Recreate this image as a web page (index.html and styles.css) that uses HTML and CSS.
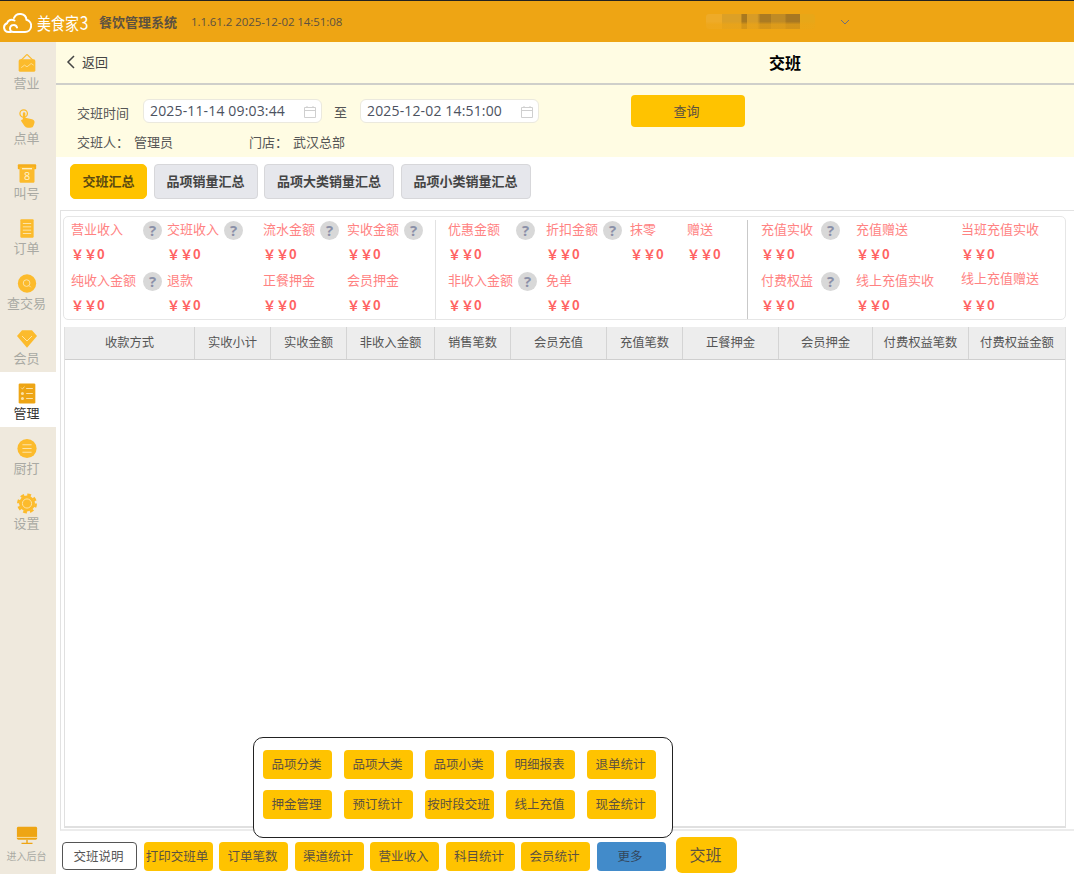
FILE: index.html
```html
<!DOCTYPE html>
<html lang="zh-CN">
<head>
<meta charset="utf-8">
<title>交班</title>
<link rel="stylesheet" href="styles.css">
</head>
<body>
<div class="app">
  <header class="topbar">
    <svg class="logo" viewBox="0 0 29 22"><path d="M8 21H5.500A4.500 4.500 0 0 1 4 12.300 5 5 0 0 1 11.500 9.500M11 7A6.500 6.500 0 0 1 23.500 8.800 6.200 6.200 0 0 1 22 21H10.500A3.500 3.500 0 0 1 10.500 14 3.500 3.500 0 0 1 14 16.500" fill="none" stroke="#fff" stroke-width="2" stroke-linecap="round"/></svg>
    <span class="brand">美食家<b>3</b></span>
    <span class="system">餐饮管理系统</span>
    <span class="version">1.1.61.2 2025-12-02 14:51:08</span>
    <span class="blur"></span>
    <svg class="chev" viewBox="0 0 10 6"><path d="M1 1l4 4 4-4" fill="none" stroke="#6b6f80" stroke-width="1"/></svg>
  </header>
  <div class="layout">
    <nav class="sidebar">
      <a class="nav"><svg viewBox="0 0 24 24"><path d="M12 1L5 8M12 1l7 7" stroke="#fcbb2c" stroke-width="1.500" fill="none"/><rect x="2" y="7" width="20" height="15" rx="2" fill="#fcbb2c"/><path d="M5 17l4-3 3 2 5-4 3 2" stroke="#fde3a5" fill="none"/></svg>营业</a>
      <a class="nav"><svg viewBox="0 0 24 24"><circle cx="8" cy="6" r="4.500" fill="none" stroke="#fcbb2c" stroke-width="1.500"/><path d="M7 6a1.500 1.500 0 0 1 3 0v5l8 2c2 .5 3.500 2 3 4l-1 3c-.5 2-2 3-4 3h-3c-2 0-3-1-4-2l-4-6c-.5-1 1-2.500 2.500-1.500L7 14z" fill="#fcbb2c"/></svg>点单</a>
      <a class="nav"><svg viewBox="0 0 24 24"><rect x="1" y="1" width="22" height="6" rx="1" fill="#f5ae1c"/><rect x="3" y="4" width="18" height="19" rx="1" fill="#fcbb2c"/><rect x="6" y="5.500" width="12" height="1.500" fill="#fff3cf"/><text class="ticket" x="12" y="20" text-anchor="middle">8</text></svg>叫号</a>
      <a class="nav"><svg viewBox="0 0 24 24"><rect x="4" y="1" width="16" height="22" rx="1" fill="#fcbb2c"/><path d="M7 6h10M7 10h10M7 14h10M7 18h10" stroke="#fde3a5" stroke-width="1.200"/></svg>订单</a>
      <a class="nav"><svg viewBox="0 0 24 24"><circle cx="12" cy="12" r="11" fill="#fcbb2c"/><circle cx="11.500" cy="11.500" r="4" fill="none" stroke="#fde3a5" stroke-width="1.200"/><path d="M14.500 14.500l2 2" stroke="#fde3a5" stroke-width="1.200"/></svg>查交易</a>
      <a class="nav"><svg viewBox="0 0 24 24"><path d="M6 2h12l6 7-12 14L0 9z" fill="#fcbb2c"/><path d="M6 9l6 6 6-6" fill="none" stroke="#fde3a5" stroke-width="1.200"/></svg>会员</a>
      <a class="nav active"><svg viewBox="0 0 24 24"><rect x="2" y="0" width="20" height="24" rx="1.500" fill="#eea514"/><path d="M5 5l1.500 1.500L9 4M11 6h8M11 12h8M11 18h8" stroke="#fbe2a8" fill="none" stroke-width="1.200"/><circle cx="6.500" cy="12" r="1.800" fill="#fbe2a8"/><circle cx="6.500" cy="18" r="1.800" fill="#fbe2a8"/></svg>管理</a>
      <a class="nav"><svg viewBox="0 0 24 24"><circle cx="12" cy="12" r="11.500" fill="#fcbb2c"/><path d="M6.500 7.500h11M6.500 12h11M6.500 16.500h11" stroke="#fde3a5" stroke-width="1.300"/></svg>厨打</a>
      <a class="nav"><svg viewBox="0 0 24 24"><circle cx="12" cy="12" r="9.500" fill="#fcbb2c"/><circle cx="12" cy="12" r="10.500" fill="none" stroke="#fcbb2c" stroke-width="3" stroke-dasharray="4.500 3.750"/><circle cx="12" cy="12" r="5.500" fill="none" stroke="#fde3a5" stroke-width="1.200"/></svg>设置</a>
      <a class="nav admin"><svg viewBox="0 0 24 24"><rect x="1" y="2" width="22" height="14" rx="1.500" fill="#eea514"/><rect x="1" y="13" width="22" height="1" fill="#fbe2a8"/><path d="M12 16v4M6 20h12" stroke="#eea514" stroke-width="1.500"/></svg>进入后台</a>
    </nav>
    <main class="main">
      <div class="head">
        <a class="back"><svg viewBox="0 0 9 14"><path d="M8 1L2 7l6 6" fill="none" stroke="#444" stroke-width="1.500"/></svg>返回</a>
        <h1 class="title">交班</h1>
      </div>
      <section class="form">
        <div class="form-row">
          <span class="form-label">交班时间</span>
          <div class="date"><span>2025-11-14 09:03:44</span><svg viewBox="0 0 12 13"><path d="M.5 2.500h11v10H.5zM.5 5.500h11M3 1v2M9 1v2" fill="none" stroke="#cfcfcf"/></svg></div>
          <span class="to">至</span>
          <div class="date"><span>2025-12-02 14:51:00</span><svg viewBox="0 0 12 13"><path d="M.5 2.500h11v10H.5zM.5 5.500h11M3 1v2M9 1v2" fill="none" stroke="#cfcfcf"/></svg></div>
          <button class="query">查询</button>
        </div>
        <div class="form-info">
          <span class="who">交班人：<em>管理员</em></span>
          <span>门店：<em>武汉总部</em></span>
        </div>
      </section>
      <div class="tabs">
        <button class="tab on">交班汇总</button>
        <button class="tab">品项销量汇总</button>
        <button class="tab wide">品项大类销量汇总</button>
        <button class="tab wide">品项小类销量汇总</button>
      </div>
      <section class="panel">
        <div class="stats">
          <div class="group g1">
            <div class="cell"><div class="lbl far"><span>营业收入</span><i class="q">?</i></div><div class="val">￥￥0</div></div>
            <div class="cell"><div class="lbl"><span>交班收入</span><i class="q">?</i></div><div class="val">￥￥0</div></div>
            <div class="cell"><div class="lbl"><span>流水金额</span><i class="q">?</i></div><div class="val">￥￥0</div></div>
            <div class="cell"><div class="lbl"><span>实收金额</span><i class="q">?</i></div><div class="val">￥￥0</div></div>
            <div class="cell"><div class="lbl far"><span>纯收入金额</span><i class="q">?</i></div><div class="val">￥￥0</div></div>
            <div class="cell"><div class="lbl"><span>退款</span></div><div class="val">￥￥0</div></div>
            <div class="cell"><div class="lbl"><span>正餐押金</span></div><div class="val">￥￥0</div></div>
            <div class="cell"><div class="lbl"><span>会员押金</span></div><div class="val">￥￥0</div></div>
          </div>
          <div class="group g2">
            <div class="cell"><div class="lbl far"><span>优惠金额</span><i class="q">?</i></div><div class="val">￥￥0</div></div>
            <div class="cell"><div class="lbl"><span>折扣金额</span><i class="q">?</i></div><div class="val">￥￥0</div></div>
            <div class="cell"><div class="lbl"><span>抹零</span></div><div class="val">￥￥0</div></div>
            <div class="cell"><div class="lbl"><span>赠送</span></div><div class="val">￥￥0</div></div>
            <div class="cell"><div class="lbl far"><span>非收入金额</span><i class="q">?</i></div><div class="val">￥￥0</div></div>
            <div class="cell"><div class="lbl"><span>免单</span></div><div class="val">￥￥0</div></div>
          </div>
          <div class="group g3">
            <div class="cell"><div class="lbl far"><span>充值实收</span><i class="q">?</i></div><div class="val">￥￥0</div></div>
            <div class="cell"><div class="lbl"><span>充值赠送</span></div><div class="val">￥￥0</div></div>
            <div class="cell"><div class="lbl"><span>当班充值实收</span></div><div class="val">￥￥0</div></div>
            <div class="cell"><div class="lbl far"><span>付费权益</span><i class="q">?</i></div><div class="val">￥￥0</div></div>
            <div class="cell"><div class="lbl"><span>线上充值实收</span></div><div class="val">￥￥0</div></div>
            <div class="cell"><div class="lbl raised"><span>线上充值赠送</span></div><div class="val">￥￥0</div></div>
          </div>
        </div>
        <div class="grid">
          <div class="grid-head">
            <span>收款方式</span><span>实收小计</span><span>实收金额</span><span>非收入金额</span><span>销售笔数</span><span>会员充值</span><span>充值笔数</span><span>正餐押金</span><span>会员押金</span><span>付费权益笔数</span><span>付费权益金额</span>
          </div>
        </div>
      </section>
      <footer class="footer">
        <button class="btn outline">交班说明</button>
        <button class="btn">打印交班单</button>
        <button class="btn">订单笔数</button>
        <button class="btn">渠道统计</button>
        <button class="btn">营业收入</button>
        <button class="btn">科目统计</button>
        <button class="btn">会员统计</button>
        <button class="btn blue">更多</button>
        <button class="btn big">交班</button>
      </footer>
      <div class="more">
        <button class="btn">品项分类</button>
        <button class="btn">品项大类</button>
        <button class="btn">品项小类</button>
        <button class="btn">明细报表</button>
        <button class="btn">退单统计</button>
        <button class="btn">押金管理</button>
        <button class="btn">预订统计</button>
        <button class="btn">按时段交班</button>
        <button class="btn">线上充值</button>
        <button class="btn">现金统计</button>
      </div>
    </main>
  </div>
</div>
</body>
</html>
```
FILE: styles.css
```css
* { box-sizing: border-box; }
html, body { margin: 0; height: 100%; }
body {
  font-family: "Noto Sans CJK SC", "Open Sans", sans-serif;
  font-size: 13px;
  color: #555;
  background: #fff;
  overflow: hidden;
}
button { font-family: inherit; font-size: 13px; padding: 0; cursor: pointer; }
em { font-style: normal; }

.app { width: 1074px; height: 874px; display: flex; flex-direction: column; }

.topbar {
  height: 42px;
  flex: none;
  background: #eea514;
  border-top: 1px solid #222;
  display: flex;
  align-items: center;
  padding: 0 224px 0 3px;
}
.logo { width: 29px; height: 22px; margin-right: 5px; }
.brand {
  color: #fff;
  font-size: 17px;
  width: 62px;
  white-space: nowrap;
  transform: scaleX(.82);
  transform-origin: left center;
}
.brand b { font-weight: 400; font-size: 19px; margin-left: 1px; }
.system { font-weight: 700; font-size: 13px; color: #5c5140; width: 93px; }
.version { font-family: "Open Sans", sans-serif; font-size: 11.500px; color: #5c5140; letter-spacing: -.08px; margin-left: -1px; }
.blur {
  margin-left: auto;
  width: 109px;
  height: 15px;
  border-radius: 3px;
  background:
    linear-gradient(#eea51400 0 50%, #eea514a0 70% 100%),
    linear-gradient(90deg, #eeab28 0 15%, #dca026 15% 32%, #a9791f 33% 38%, #d89c26 38% 47%, #ab7b22 50% 60%, #c08b25 60% 72%, #a87822 74% 86%, #e8a718 86% 100%);
}
.chev { width: 10px; height: 6px; margin-left: 25px; }

.layout { flex: 1; display: flex; min-height: 0; }

.sidebar {
  width: 56px;
  flex: none;
  background: #efe9dd;
  display: flex;
  flex-direction: column;
}
.nav {
  height: 55px;
  padding: 11px 3px 0 0;
  flex: none;
  display: flex;
  flex-direction: column;
  align-items: center;
  color: #a9a9a3;
  font-size: 13px;
  line-height: 18px;
}
.nav svg { width: 20px; height: 21px; flex: none; }
.nav.active { background: #fff; color: #333; }
.nav.admin { margin-top: auto; height: 48px; padding-top: 0; font-size: 10px; line-height: 14px; margin-bottom: 1px; }
.nav.admin svg { width: 22px; height: 22px; margin-bottom: 2px; }
.ticket { font-family: "Open Sans", sans-serif; font-size: 13px; fill: #fff3cf; }

.main { position: relative; flex: 1; min-width: 0; display: flex; flex-direction: column; }

.head {
  height: 43px;
  flex: none;
  background: #fffce3;
  border-bottom: 2px solid #cfcfca;
  display: flex;
  align-items: center;
  padding: 0 273px 2px 10px;
}
.back { display: flex; align-items: center; gap: 7px; color: #444; }
.back svg { width: 9px; height: 14px; }
.title { margin: 0 0 0 auto; font-size: 16px; font-weight: 700; color: #000; }

.form { height: 72px; flex: none; background: #fffce3; padding: 10px 0 0 21px; }
.form-row { height: 32px; display: flex; align-items: center; }
.form-label { margin-top: 2px; }
.date {
  width: 179px;
  height: 24px;
  margin-left: 14px;
  background: #fff;
  border: 1px solid #ebe9de;
  border-radius: 6px;
  display: flex;
  align-items: center;
  justify-content: space-between;
  padding: 0 5px 0 6px;
  font-family: "Open Sans", sans-serif;
  font-size: 14px;
  letter-spacing: .15px;
  color: #4c5260;
}
.date span { margin-top: -1px; }
.date svg { width: 12px; height: 13px; }
.to { margin-left: 12px; }
.to + .date { margin-left: 13px; }
.query {
  width: 114px;
  height: 32px;
  margin-left: 92px;
  padding: 0 3px 2px 0;
  background: #ffc300;
  border: 0;
  border-radius: 4px;
  color: #5c5140;
}
.form-info { margin-top: 5px; height: 20px; line-height: 20px; display: flex; }
.form-info em { margin-left: 5px; }
.who { width: 172px; }

.tabs { flex: none; display: flex; gap: 6.500px; padding: 7px 0 0 14px; height: 53px; }
.tab {
  width: 104px;
  height: 35px;
  padding-bottom: 2px;
  background: #e6e7ec;
  border: 1px solid #d7d7da;
  border-radius: 4px;
  color: #444;
  font-weight: 700;
}
.tab.on { width: 77px; background: #ffc300; border-color: #ffc300; border-radius: 5px; color: #5c4a10; }
.tab.wide { width: 130px; }

.panel {
  flex: 1;
  min-height: 0;
  margin-left: 4px;
  border-top: 1px solid #e2e2e2;
  border-left: 1px solid #e2e2e2;
  border-bottom: 2px solid #ececec;
  padding: 5px 8px 1px 2px;
  display: flex;
  flex-direction: column;
}
.stats {
  height: 104px;
  flex: none;
  border: 1px solid #e6e6e6;
  border-radius: 5px;
  display: flex;
  padding-top: 3px;
}
.group { display: grid; grid-auto-rows: 51px; padding-left: 7px; }
.g1 { width: 372px; grid-template-columns: 96px 96px 84px 1fr; border-right: 1px solid #e2e2e2; }
.g2 { width: 312px; padding-left: 12px; grid-template-columns: 98px 84px 57px 1fr; border-right: 1px solid #c9c9c9; }
.g3 { flex: 1; padding-left: 13px; grid-template-columns: 95px 105px 1fr; }
.lbl { height: 20px; display: flex; align-items: center; color: #ff8282; line-height: 20px; white-space: nowrap; }
.lbl span { margin-top: -2px; }
.lbl.raised { margin-top: -2px; margin-bottom: 2px; }
.lbl.far { justify-content: space-between; padding-right: 5px; }
.g2 .lbl.far { padding-right: 11px; }
.g3 .lbl.far { padding-right: 16px; }
.val { height: 28px; line-height: 28px; color: #ff6363; font-weight: 700; font-size: 13px; }
.q {
  width: 19px;
  height: 19px;
  flex: none;
  margin-left: 5px;
  border-radius: 50%;
  background: #d8d8d8;
  color: #8b90a8;
  font: 700 15px/19px "Open Sans", sans-serif;
  text-align: center;
}

.grid { flex: 1; min-height: 0; margin: 7px 0 0 1px; border: 1px solid #e0e0e0; border-bottom-width: 2px; }
.grid-head {
  height: 33px;
  display: grid;
  grid-template-columns: 130px 76px 76px 88px 76px 96px 76px 96px 94px 96px 1fr;
  background: #ededed;
  border-bottom: 1px solid #cfcfcf;
  margin: -1px 0 0 0;
  font-size: 12.300px;
}
.grid-head span { display: flex; align-items: center; justify-content: center; padding-bottom: 2px; border-right: 1px solid #d4d4d4; white-space: nowrap; }
.grid-head span:last-child { border-right: 0; }

.footer { height: 43px; flex: none; display: flex; gap: 6.500px; padding: 6px 0 0 6px; align-items: flex-start; }
.btn {
  width: 69px;
  height: 29px;
  padding: 0 2px 2px 0;
  background: #ffc300;
  border: 0;
  border-radius: 4px;
  color: #5c5140;
  font-size: 12.500px;
  white-space: nowrap;
}
.footer .btn { margin-top: 5px; }
.footer .btn.outline { width: 75px; height: 28px; background: #fff; border: 1px solid #555; color: #555; }
.footer .btn.blue { background: #428bca; color: #33475c; }
.footer .btn.big { width: 61px; height: 36px; margin: 0 0 0 4px; border-radius: 6px; font-size: 16px; }

.more {
  position: absolute;
  left: 197px;
  bottom: 36px;
  width: 420px;
  height: 101px;
  background: #fff;
  border: 1px solid #222;
  border-radius: 10px;
  padding: 12px 9px;
  display: grid;
  grid-template-columns: repeat(5, 69px);
  grid-auto-rows: 29px;
  column-gap: 12px;
  row-gap: 11px;
}
```
